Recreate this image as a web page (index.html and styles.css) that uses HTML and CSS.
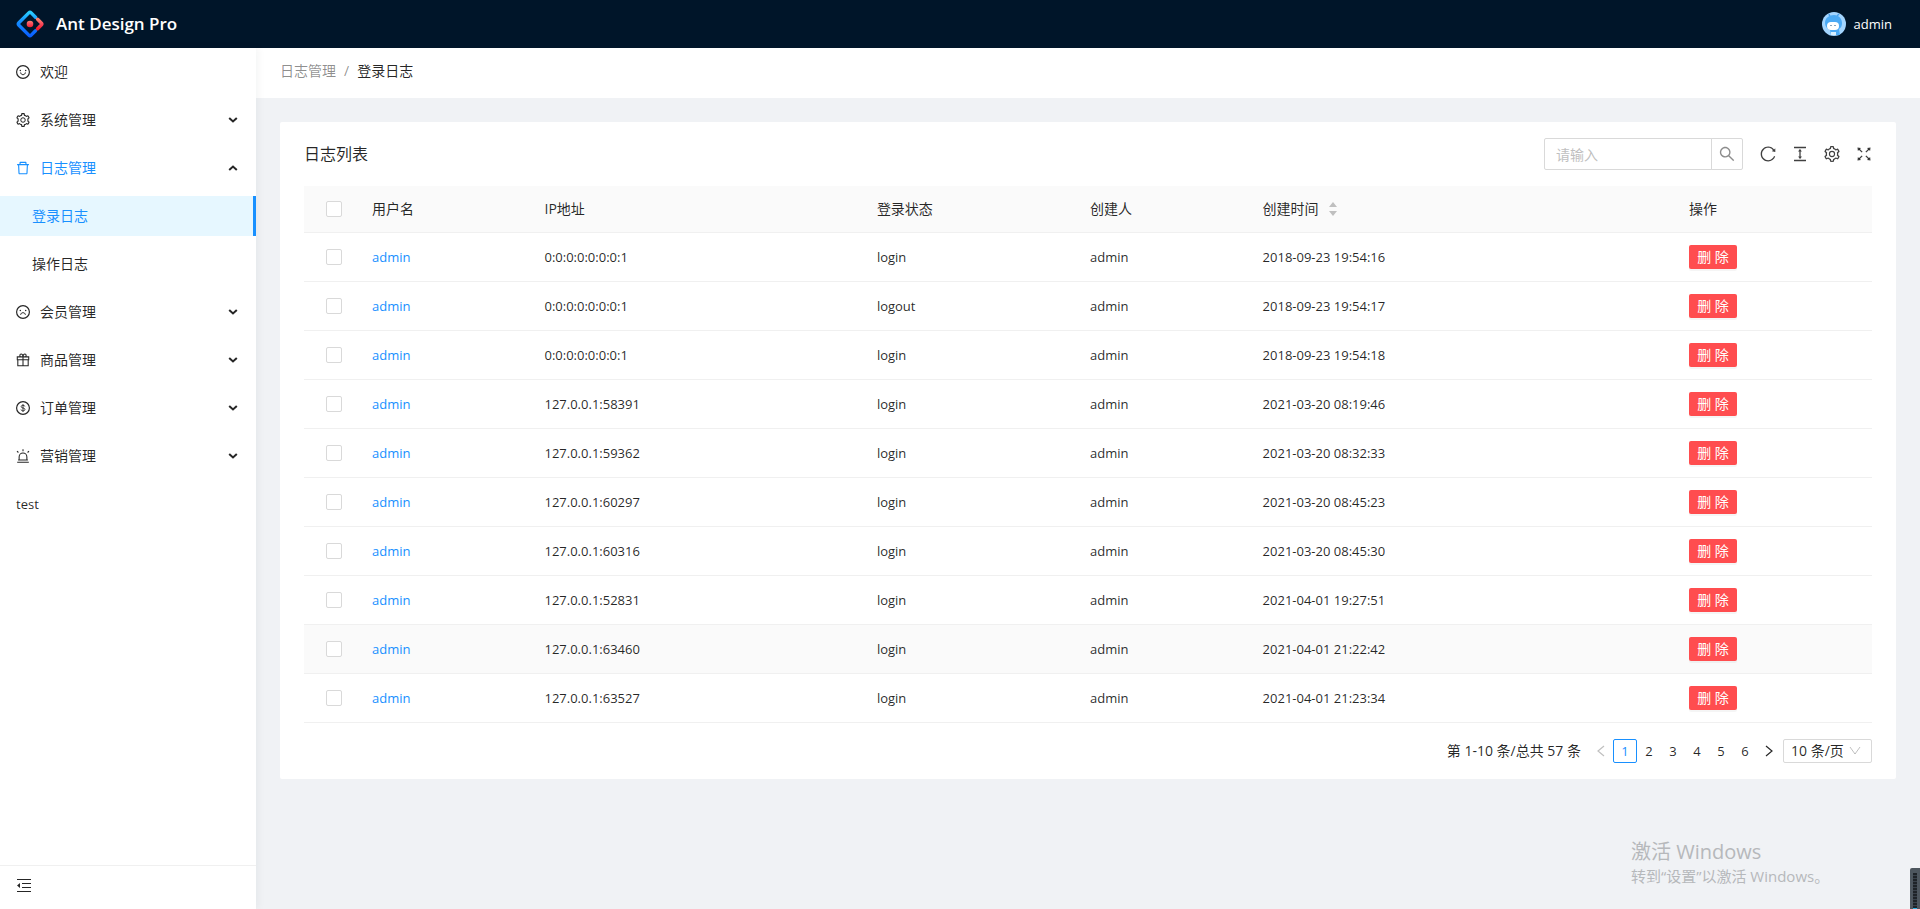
FILE: index.html
```html
<!DOCTYPE html>
<html lang="zh-CN">
<head>
<meta charset="utf-8">
<title>登录日志 - Ant Design Pro</title>
<link rel="stylesheet" href="styles.css">
</head>
<body>
<svg class="defs" aria-hidden="true">
  <defs>
    <linearGradient id="blue" x1="0" y1="0" x2="0" y2="1"><stop offset="0" stop-color="#29cdff"/><stop offset="0.4" stop-color="#148eff"/><stop offset="1" stop-color="#0a60ff"/></linearGradient>
    <linearGradient id="red" x1="0" y1="0" x2="0" y2="1"><stop offset="0" stop-color="#fa816e"/><stop offset="0.5" stop-color="#f74a5c"/><stop offset="1" stop-color="#f51d2c"/></linearGradient>
    <symbol id="smile" viewBox="64 64 896 896"><circle cx="512" cy="512" r="410" fill="none" stroke="currentColor" stroke-width="76"/><circle cx="340" cy="420" r="48"/><circle cx="684" cy="420" r="48"/><path d="M360 540c8 90 72 144 152 144s144-54 152-144" fill="none" stroke="currentColor" stroke-width="64"/></symbol>
    <symbol id="frown" viewBox="64 64 896 896"><circle cx="512" cy="512" r="410" fill="none" stroke="currentColor" stroke-width="76"/><circle cx="340" cy="420" r="48"/><circle cx="684" cy="420" r="48"/><path d="M360 690c8-90 72-132 152-132s144 42 152 132" fill="none" stroke="currentColor" stroke-width="64"/></symbol>
    <symbol id="dollar" viewBox="64 64 896 896"><circle cx="512" cy="512" r="410" fill="none" stroke="currentColor" stroke-width="76"/><path d="M630 415c-8-52-52-82-118-82-70 0-117 34-117 88 0 50 34 72 117 90 90 20 124 44 124 94 0 58-48 92-124 92-72 0-122-34-128-90M512 270v486" fill="none" stroke="currentColor" stroke-width="54"/></symbol>
    <symbol id="gift" viewBox="64 64 896 896"><path d="M146 310h732v180H146zM180 490v386h664V490M512 310v566M512 306c-12-130-60-178-120-178-102 0-114 178 0 178M512 306c12-130 60-178 120-178 102 0 114 178 0 178" fill="none" stroke="currentColor" stroke-width="68"/></symbol>
    <symbol id="alert" viewBox="64 64 896 896"><path d="M264 770V568c0-137 111-248 248-248s248 111 248 248v202M140 916h744M200 770h624M512 84v120M128 198l90 90M896 198l-90 90" fill="none" stroke="currentColor" stroke-width="68"/></symbol>
    <symbol id="delete" viewBox="64 64 896 896"><path d="M360 184h304v72h72v-80c0-35.300-28.700-64-64-64H352c-35.300 0-64 28.700-64 64v80h72v-72zm504 72H160c-17.700 0-32 14.300-32 32v32c0 4.400 3.600 8 8 8h60.400l24.700 523c1.600 34.100 29.800 61 63.900 61h454c34.200 0 62.300-26.800 63.900-61l24.700-523H888c4.400 0 8-3.600 8-8v-32c0-17.700-14.300-32-32-32zM731.300 840H292.700l-24.200-512h487l-24.200 512z"/></symbol>
    <symbol id="setting" viewBox="64 64 896 896"><path d="M924.8 625.7l-65.5-56c3.1-19 4.7-38.4 4.7-57.8s-1.6-38.8-4.7-57.8l65.5-56a32.03 32.03 0 009.3-35.2l-.9-2.6a443.74 443.74 0 00-79.7-137.9l-1.800-2.100a32.120 32.120 0 00-35.100-9.500l-81.300 28.900c-30-24.600-63.500-44-99.700-57.600l-15.700-85a32.050 32.050 0 00-25.800-25.700l-2.700-.5c-52.100-9.400-106.900-9.400-159 0l-2.700.5a32.050 32.050 0 00-25.800 25.700l-15.800 85.400a351.860 351.860 0 00-99 57.400l-81.900-29.100a32 32 0 00-35.100 9.500l-1.800 2.100a446.020 446.020 0 00-79.700 137.900l-.9 2.600c-4.500 12.500-.8 26.500 9.300 35.200l66.300 56.600c-3.100 18.800-4.600 38-4.600 57.100 0 19.200 1.500 38.400 4.600 57.100L99 625.500a32.030 32.030 0 00-9.300 35.200l.9 2.600c18.100 50.400 44.900 96.900 79.700 137.900l1.800 2.100a32.120 32.120 0 0035.100 9.500l81.900-29.100c29.800 24.500 63.100 43.900 99 57.400l15.800 85.400a32.050 32.050 0 0025.800 25.700l2.700.5a449.400 449.400 0 00159 0l2.700-.5a32.050 32.050 0 0025.800-25.700l15.700-85a350 350 0 0099.700-57.600l81.300 28.900a32 32 0 0035.100-9.500l1.800-2.100c34.800-41.100 61.600-87.500 79.700-137.900l.9-2.600c4.500-12.300.8-26.300-9.300-35zM788.300 465.900c2.500 15.100 3.800 30.600 3.800 46.100s-1.300 31-3.800 46.100l-6.600 40.100 74.700 63.900a370.030 370.030 0 01-42.600 73.600L721 702.800l-31.400 25.800c-23.900 19.600-50.500 35-79.300 45.800l-38.100 14.300-17.900 97a377.500 377.500 0 01-85 0l-17.900-97.200-37.800-14.500c-28.500-10.800-55-26.200-78.700-45.700l-31.400-25.900-93.400 33.200c-17-22.900-31.200-47.600-42.600-73.600l75.500-64.500-6.500-40c-2.400-14.900-3.700-30.300-3.700-45.500 0-15.300 1.200-30.600 3.700-45.500l6.500-40-75.500-64.500c11.300-26.100 25.600-50.700 42.600-73.600l93.400 33.200 31.400-25.900c23.700-19.500 50.200-34.900 78.700-45.700l37.900-14.300 17.900-97.200c28.100-3.200 56.800-3.200 85 0l17.900 97 38.100 14.300c28.700 10.800 55.400 26.200 79.300 45.800l31.400 25.800 92.800-32.900c17 22.900 31.200 47.600 42.600 73.600L781.800 426l6.500 39.900z"/><circle cx="512" cy="512" r="144" fill="none" stroke="currentColor" stroke-width="64"/></symbol>
    <symbol id="search" viewBox="64 64 896 896"><path d="M909.6 854.5L649.9 594.8C690.2 542.7 712 479 712 412c0-80.2-31.3-155.4-87.9-212.1-56.6-56.7-132-87.9-212.1-87.9s-155.5 31.3-212.1 87.9C143.2 256.5 112 331.8 112 412c0 80.1 31.3 155.500 87.900 212.100C256.500 680.800 331.800 712 412 712c67 0 130.600-21.800 182.700-62l259.700 259.600a8.200 8.200 0 0011.600 0l43.600-43.500a8.200 8.200 0 000-11.600zM570.400 570.400C528 612.700 471.800 636 412 636s-116-23.300-158.400-65.600C211.300 528 188 471.800 188 412s23.300-116.100 65.600-158.400C296 211.300 352.200 188 412 188s116.100 23.200 158.400 65.600S636 352.200 636 412s-23.300 116.100-65.600 158.400z"/></symbol>
    <symbol id="reload" viewBox="64 64 896 896"><path d="M909.1 209.3l-56.4 44.1C775.8 155.1 656.2 92 521.9 92 290 92 102.3 279.5 102 511.5 101.7 743.7 289.8 932 521.9 932c181.3 0 335.8-115 394.6-276.1 1.5-4.2-.7-8.9-4.9-10.3l-56.7-19.5a8 8 0 00-10.1 4.8c-1.8 5-3.8 10-5.9 14.9-17.3 41-42.1 77.8-73.7 109.4A344.77 344.77 0 01655.9 829c-42.3 17.9-87.4 27-133.8 27-46.5 0-91.5-9.1-133.8-27A341.5 341.5 0 01279 755.2a342.16 342.16 0 01-73.7-109.4c-17.9-42.4-27-87.4-27-133.9s9.1-91.5 27-133.9c17.3-41 42.1-77.8 73.7-109.4 31.6-31.6 68.4-56.4 109.3-73.8 42.3-17.9 87.4-27 133.8-27 46.5 0 91.5 9.1 133.8 27a341.5 341.5 0 01109.3 73.8c9.9 9.9 19.2 20.4 27.8 31.4l-60.2 47a8 8 0 003 14.1l175.6 43c5 1.200 9.900-2.600 9.900-7.700l.8-180.900c-.1-6.600-7.800-10.300-13-6.200z"/></symbol>
    <symbol id="density" viewBox="64 64 896 896"><path d="M840 836H184c-4.4 0-8 3.6-8 8v60c0 4.4 3.6 8 8 8h656c4.4 0 8-3.6 8-8v-60c0-4.4-3.6-8-8-8zm0-724H184c-4.4 0-8 3.6-8 8v60c0 4.4 3.6 8 8 8h656c4.4 0 8-3.6 8-8v-60c0-4.4-3.6-8-8-8zM610.8 378c6 0 9.4-7 5.7-11.7L515.7 238.7a7.14 7.14 0 00-11.3 0L403.6 366.3a7.23 7.23 0 005.7 11.7H476v268h-62.8c-6 0-9.4 7-5.7 11.7l100.8 127.5c2.9 3.7 8.5 3.7 11.3 0l100.8-127.500c3.700-4.700.4-11.700-5.700-11.700H548V378h62.800z"/></symbol>
    <symbol id="fullscreen" viewBox="64 64 896 896"><path d="M230 230l178 178M794 230L616 408M230 794l178-178M794 794L616 616" fill="none" stroke="currentColor" stroke-width="72"/><path d="M146 146l200 24-176 176zM878 146l-200 24 176 176zM146 878l200-24-176-176zM878 878l-200-24 176-176z"/></symbol>
    <symbol id="fold" viewBox="0 0 16 16"><path d="M1 1h14v1H1zM6 5h9v1H6zM6 9h9v1H6zM1 13h14v1H1zM4 5v5L1 7.500z"/></symbol>
    <symbol id="down" viewBox="0 0 10 6"><path d="M1.200 1L5 4.500 8.800 1" fill="none" stroke="currentColor" stroke-width="2"/></symbol>
    <symbol id="thin-down" viewBox="0 0 12 12"><path d="M1 2l5 7 5-7" fill="none" stroke="currentColor"/></symbol>
    <symbol id="angle" viewBox="0 0 12 12"><path d="M3 1l6 5-6 5" fill="none" stroke="currentColor" stroke-width="1.200"/></symbol>
  </defs>
</svg>

<header class="topbar">
  <a class="brand" href="#">
    <svg class="logo" viewBox="0 0 28 28" aria-hidden="true">
      <path fill="none" d="M19.500 7.200L15.200 2.900a1.700 1.700 0 0 0-2.400 0L2.900 12.800a1.700 1.700 0 0 0 0 2.400l9.900 9.900a1.700 1.700 0 0 0 2.400 0l4.300-4.300" stroke="url(#blue)" stroke-width="3.400" stroke-linecap="round"/>
      <path fill="none" d="M21.600 9.300l3.900 3.900a1.200 1.200 0 0 1 0 1.600l-3.900 3.900" stroke="url(#red)" stroke-width="3.400" stroke-linecap="round"/>
      <circle cx="14" cy="14" r="3.300" fill="url(#red)"/>
    </svg>
    <span>Ant Design Pro</span>
  </a>
  <button class="account" type="button">
    <svg class="avatar" viewBox="0 0 24 24" aria-hidden="true">
      <circle cx="12" cy="12" r="12" fill="#a3d5ff"/>
      <path d="M8 5L7 2M15 4l2-2" stroke="#4a9fe8" stroke-width="1.400"/>
      <path d="M12 3c5 0 8 4 8 8 0 3-1 5-3 6l1 6H9l-1-5c-3-1-5-4-5-7 0-5 4-8 9-8z" fill="#4baaf5"/>
      <rect x="5" y="10" width="12" height="8" rx="4" fill="#fff"/>
      <path d="M8 13l1 1 1-1M12 13l1 1 1-1" stroke="#8ba5bd" fill="none"/>
      <path d="M9 20h5v3H9z" fill="#d7efff"/>
    </svg>
    <span class="latin">admin</span>
  </button>
</header>

<div class="layout">
  <aside class="sider">
    <nav class="menu">
      <a class="item" href="#"><svg class="ico"><use href="#smile"/></svg><span>欢迎</span></a>
      <a class="item" href="#"><svg class="ico"><use href="#setting"/></svg><span>系统管理</span><svg class="arrow"><use href="#down"/></svg></a>
      <a class="item open" href="#"><svg class="ico"><use href="#delete"/></svg><span>日志管理</span><svg class="arrow up"><use href="#down"/></svg></a>
      <a class="item sub selected" href="#"><span>登录日志</span></a>
      <a class="item sub" href="#"><span>操作日志</span></a>
      <a class="item" href="#"><svg class="ico"><use href="#frown"/></svg><span>会员管理</span><svg class="arrow"><use href="#down"/></svg></a>
      <a class="item" href="#"><svg class="ico"><use href="#gift"/></svg><span>商品管理</span><svg class="arrow"><use href="#down"/></svg></a>
      <a class="item" href="#"><svg class="ico"><use href="#dollar"/></svg><span>订单管理</span><svg class="arrow"><use href="#down"/></svg></a>
      <a class="item" href="#"><svg class="ico"><use href="#alert"/></svg><span>营销管理</span><svg class="arrow"><use href="#down"/></svg></a>
      <a class="item" href="#"><span class="latin">test</span></a>
    </nav>
    <div class="collapse"><button type="button" aria-label="收起菜单"><svg class="tool-ico"><use href="#fold"/></svg></button></div>
  </aside>

  <div class="main">
    <nav class="breadcrumb"><a href="#">日志管理</a><span class="slash">/</span><span class="current">登录日志</span></nav>

    <main class="card">
      <div class="toolbar">
        <h1>日志列表</h1>
        <form class="search">
          <input type="text" placeholder="请输入" aria-label="请输入">
          <button type="button" aria-label="搜索"><svg><use href="#search"/></svg></button>
        </form>
        <div class="tools">
          <button type="button" aria-label="刷新"><svg class="tool-ico"><use href="#reload"/></svg></button>
          <button type="button" aria-label="密度"><svg class="tool-ico"><use href="#density"/></svg></button>
          <button type="button" aria-label="列设置"><svg class="tool-ico"><use href="#setting"/></svg></button>
          <button type="button" aria-label="全屏"><svg class="tool-ico"><use href="#fullscreen"/></svg></button>
        </div>
      </div>

      <table>
        <colgroup><col class="c-check"><col class="c-short"><col class="c-ip"><col class="c-status"><col class="c-short"><col class="c-time"><col></colgroup>
        <thead>
          <tr><th class="check"><input type="checkbox" aria-label="全选"></th><th>用户名</th><th>IP地址</th><th>登录状态</th><th>创建人</th><th><span class="sortable">创建时间<svg class="sorter" viewBox="0 0 8 14"><path d="M0 5l4-5 4 5zM0 9h8l-4 5z"/></svg></span></th><th>操作</th></tr>
        </thead>
        <tbody>
          <tr><td class="check"><input type="checkbox" aria-label="选择第1行"></td><td><a href="#">admin</a></td><td>0:0:0:0:0:0:0:1</td><td>login</td><td>admin</td><td>2018-09-23 19:54:16</td><td><button class="danger" type="button">删 除</button></td></tr>
          <tr><td class="check"><input type="checkbox" aria-label="选择第2行"></td><td><a href="#">admin</a></td><td>0:0:0:0:0:0:0:1</td><td>logout</td><td>admin</td><td>2018-09-23 19:54:17</td><td><button class="danger" type="button">删 除</button></td></tr>
          <tr><td class="check"><input type="checkbox" aria-label="选择第3行"></td><td><a href="#">admin</a></td><td>0:0:0:0:0:0:0:1</td><td>login</td><td>admin</td><td>2018-09-23 19:54:18</td><td><button class="danger" type="button">删 除</button></td></tr>
          <tr><td class="check"><input type="checkbox" aria-label="选择第4行"></td><td><a href="#">admin</a></td><td>127.0.0.1:58391</td><td>login</td><td>admin</td><td>2021-03-20 08:19:46</td><td><button class="danger" type="button">删 除</button></td></tr>
          <tr><td class="check"><input type="checkbox" aria-label="选择第5行"></td><td><a href="#">admin</a></td><td>127.0.0.1:59362</td><td>login</td><td>admin</td><td>2021-03-20 08:32:33</td><td><button class="danger" type="button">删 除</button></td></tr>
          <tr><td class="check"><input type="checkbox" aria-label="选择第6行"></td><td><a href="#">admin</a></td><td>127.0.0.1:60297</td><td>login</td><td>admin</td><td>2021-03-20 08:45:23</td><td><button class="danger" type="button">删 除</button></td></tr>
          <tr><td class="check"><input type="checkbox" aria-label="选择第7行"></td><td><a href="#">admin</a></td><td>127.0.0.1:60316</td><td>login</td><td>admin</td><td>2021-03-20 08:45:30</td><td><button class="danger" type="button">删 除</button></td></tr>
          <tr><td class="check"><input type="checkbox" aria-label="选择第8行"></td><td><a href="#">admin</a></td><td>127.0.0.1:52831</td><td>login</td><td>admin</td><td>2021-04-01 19:27:51</td><td><button class="danger" type="button">删 除</button></td></tr>
          <tr class="hover"><td class="check"><input type="checkbox" aria-label="选择第9行"></td><td><a href="#">admin</a></td><td>127.0.0.1:63460</td><td>login</td><td>admin</td><td>2021-04-01 21:22:42</td><td><button class="danger" type="button">删 除</button></td></tr>
          <tr><td class="check"><input type="checkbox" aria-label="选择第10行"></td><td><a href="#">admin</a></td><td>127.0.0.1:63527</td><td>login</td><td>admin</td><td>2021-04-01 21:23:34</td><td><button class="danger" type="button">删 除</button></td></tr>
        </tbody>
      </table>

      <div class="pagination">
        <span class="total">第 1-10 条/总共 57 条</span>
        <button class="page prev" type="button" aria-label="上一页" disabled><svg><use href="#angle"/></svg></button>
        <button class="page active" type="button">1</button>
        <button class="page" type="button">2</button>
        <button class="page" type="button">3</button>
        <button class="page" type="button">4</button>
        <button class="page" type="button">5</button>
        <button class="page" type="button">6</button>
        <button class="page" type="button" aria-label="下一页"><svg><use href="#angle"/></svg></button>
        <div class="size">
          <select aria-label="每页条数"><option>10 条/页</option><option>20 条/页</option><option>50 条/页</option></select>
          <svg><use href="#thin-down"/></svg>
        </div>
      </div>
    </main>
  </div>
</div>

<div class="watermark"><p class="wm-title">激活 Windows</p><p>转到“设置”以激活 Windows。</p></div>
<div class="widget"><div class="widget-slot"></div></div>
</body>
</html>
```

FILE: styles.css
```css
* { box-sizing: border-box; }

body {
  margin: 0;
  min-height: 100vh;
  display: flex;
  flex-direction: column;
  background: #f0f2f5;
  color: rgba(0, 0, 0, 0.85);
  font: 14px/22px "Open Sans", "Noto Sans CJK SC", sans-serif;
  overflow: hidden;
}

a { color: inherit; text-decoration: none; }
svg { fill: currentColor; flex: none; }
p, h1 { margin: 0; }

button {
  padding: 0;
  border: 0;
  background: none;
  color: inherit;
  font: inherit;
  cursor: pointer;
}

.defs { position: absolute; width: 0; height: 0; }
.latin { font-size: 13px; }

/* Top bar */
.topbar {
  display: flex;
  justify-content: space-between;
  align-items: center;
  height: 48px;
  padding: 0 16px;
  background: #001529;
  color: #fff;
}

.brand {
  display: flex;
  align-items: center;
  gap: 12px;
  font-size: 17px;
  font-weight: 600;
}

.logo { width: 28px; height: 28px; }

.account { display: flex; align-items: center; gap: 8px; padding: 0 12px; }
.avatar { width: 24px; height: 24px; }

/* Side menu */
.layout { display: flex; flex: 1; }

.sider {
  position: relative;
  display: flex;
  flex-direction: column;
  width: 256px;
  flex: none;
  background: #fff;
  box-shadow: 2px 0 8px rgba(29, 35, 41, 0.05);
}

.menu { flex: 1; padding-top: 4px; }

.item {
  display: flex;
  align-items: center;
  gap: 10px;
  height: 40px;
  margin-bottom: 8px;
  padding: 0 18px 0 16px;
}

.ico { width: 14px; height: 14px; }
.arrow { width: 10px; height: 6px; margin-left: auto; color: rgba(0, 0, 0, 0.85); }
.up { transform: rotate(180deg); }
.open { color: #1890ff; }
.sub { padding-left: 32px; }

.selected {
  background: #e6f7ff;
  border-right: 3px solid #1890ff;
  color: #1890ff;
}

.collapse {
  display: flex;
  align-items: center;
  height: 44px;
  padding: 0 16px;
  padding-bottom: 4px;
  border-top: 1px solid #f0f0f0;
}

.collapse button { display: flex; }
.tool-ico { width: 16px; height: 16px; }

/* Content */
.main { flex: 1; min-width: 0; }

.breadcrumb {
  height: 50px;
  padding: 12px 24px;
  background: #fff;
  color: rgba(0, 0, 0, 0.45);
}

.slash { margin: 0 8px; }
.current { color: rgba(0, 0, 0, 0.85); }

.card {
  margin: 24px;
  padding: 0 24px 16px;
  background: #fff;
  border-radius: 2px;
}

.toolbar { display: flex; align-items: center; height: 64px; gap: 17px; }
.toolbar h1 { margin-right: auto; font-size: 16px; font-weight: 400; }

.search { display: flex; }

.search input {
  width: 168px;
  height: 32px;
  padding: 0 11px;
  border: 1px solid #d9d9d9;
  border-radius: 2px 0 0 2px;
  font: inherit;
}

.search input::placeholder { color: #bfbfbf; }

.search button {
  display: flex;
  align-items: center;
  justify-content: center;
  width: 32px;
  height: 32px;
  margin-left: -1px;
  border: 1px solid #d9d9d9;
  border-radius: 0 2px 2px 0;
  color: rgba(0, 0, 0, 0.45);
}

.search svg { width: 16px; height: 16px; }

.tools { display: flex; gap: 16px; color: rgba(0, 0, 0, 0.75); }
.tools button { display: flex; }

/* Table */
table { width: 100%; table-layout: fixed; border-collapse: separate; border-spacing: 0; }
.c-check { width: 60px; }
.c-short { width: 11%; }
.c-ip { width: 21.2%; }
.c-status { width: 13.6%; }
.c-time { width: 27.2%; }

th, td {
  height: 49px;
  padding: 0 8px;
  border-bottom: 1px solid #f0f0f0;
  text-align: left;
  vertical-align: middle;
}

th { height: 47px; background: #fafafa; font-weight: 400; }
td { font-size: 13px; }
td a { color: #1890ff; }
.check { text-align: center; }
.hover td { background: #fafafa; }

input[type="checkbox"] {
  appearance: none;
  display: block;
  width: 16px;
  height: 16px;
  margin: 0 auto;
  border: 1px solid #d9d9d9;
  border-radius: 2px;
  background: #fff;
}

.sortable { display: flex; align-items: center; gap: 10px; }
.sorter { width: 8px; height: 14px; color: #bfbfbf; }

.danger {
  display: block;
  width: 48px;
  height: 24px;
  border-radius: 2px;
  background: #ff4d4f;
  box-shadow: 0 2px 0 rgba(0, 0, 0, 0.04);
  color: #fff;
  font-size: 14px;
}

/* Pagination */
.pagination { display: flex; justify-content: flex-end; align-items: center; margin-top: 16px; }
.total { margin-right: 8px; }

.page {
  display: flex;
  align-items: center;
  justify-content: center;
  width: 24px;
  height: 24px;
  border-radius: 2px;
  font-size: 13px;
}

.page svg { width: 12px; height: 12px; }
.prev { color: rgba(0, 0, 0, 0.25); }
.prev svg { transform: rotate(180deg); }
.active { border: 1px solid #1890ff; color: #1890ff; }

.size { position: relative; margin-left: 2px; }

.size select {
  appearance: none;
  display: block;
  width: 89px;
  height: 24px;
  padding: 0 7px;
  border: 1px solid #d9d9d9;
  border-radius: 2px;
  background: #fff;
  color: inherit;
  font: inherit;
}

.size svg {
  position: absolute;
  right: 11px;
  top: 6px;
  width: 12px;
  height: 12px;
  color: rgba(0, 0, 0, 0.25);
  pointer-events: none;
}

/* Desktop overlays */
.watermark {
  position: absolute;
  right: 92px;
  bottom: 22px;
  width: 197px;
  color: #b6b8bb;
  font-size: 15px;
  white-space: nowrap;
}

.wm-title { font-size: 20px; line-height: 26px; }

.widget {
  position: absolute;
  right: 0;
  bottom: 0;
  width: 10px;
  height: 41px;
  padding: 5px 3px 0;
  border-radius: 2px 0 0 0;
  background: #4d565e;
}

.widget-slot {
  height: 36px;
  border-bottom: 1px solid #2fb4e8;
  background: repeating-linear-gradient(#1e2328 0 2px, #39414a 2px 3px);
}
```
